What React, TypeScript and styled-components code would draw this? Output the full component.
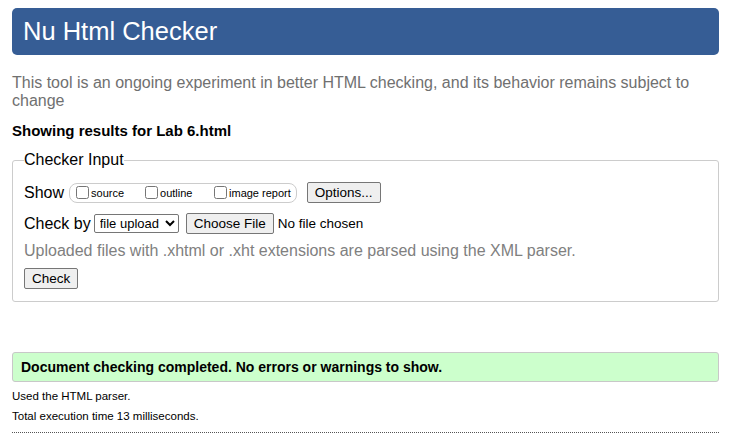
import styled, { createGlobalStyle } from "styled-components";

const GlobalStyle = createGlobalStyle`
  body {
    margin: 0;
    font-family: "Liberation Sans", Arial, sans-serif;
    background: #fff;
    color: #000;
  }
`;

const Page = styled.div`
  padding: 8px 14px 0 12px;
`;

const Header = styled.h1`
  margin: 0;
  height: 47px;
  display: flex;
  align-items: center;
  padding: 0 11px;
  background: #365d95;
  color: #fff;
  font-size: 25.5px;
  font-weight: normal;
  border-radius: 5px;
`;

const Intro = styled.p`
  margin: 19px 0 0;
  font-size: 16px;
  line-height: 18px;
  color: #707070;
`;

const ResultsFor = styled.p`
  margin: 12px 0 0;
  font-size: 15px;
  font-weight: bold;
`;

const Fieldset = styled.fieldset`
  margin: 12px 0 0;
  padding: 8px 11px 12px;
  border: 1px solid #ccc;
  border-radius: 3px;
`;

const Legend = styled.legend`
  font-size: 16px;
  padding: 0;
  margin-left: 0;
`;

const Row = styled.div<{ $top?: number }>`
  display: flex;
  align-items: center;
  font-size: 16px;
  margin-top: ${(p) => p.$top ?? 0}px;
`;

const CheckGroup = styled.span`
  display: inline-flex;
  align-items: center;
  margin-left: 5px;
  height: 18px;
  padding: 0 5px 0 6px;
  border: 1px solid #ccc;
  border-radius: 8px;
`;

const CheckLabel = styled.label<{ $w?: number }>`
  display: inline-flex;
  align-items: center;
  width: ${(p) => (p.$w ? `${p.$w}px` : "auto")};
  font-size: 11px;
`;

const Box = styled.input`
  margin: 0 2px 0 0;
  width: 13px;
  height: 13px;
`;

const Button = styled.button<{ $left?: number }>`
  margin-left: ${(p) => p.$left ?? 0}px;
  font-family: "Liberation Sans", Arial, sans-serif;
  font-size: 13.5px;
  height: 21px;
  padding: 0 7px;
  background: #efefef;
  border: 1px solid #767676;
  border-radius: 2px;
  color: #000;
`;

const Select = styled.select`
  margin-left: 3px;
  font-family: "Liberation Sans", Arial, sans-serif;
  font-size: 13px;
  height: 19px;
  width: 85px;
  border: 1px solid #767676;
  border-radius: 2px;
  padding: 0 1px;
  background: #fff;
`;

const NoFile = styled.span`
  margin-left: 4px;
  font-size: 13.5px;
`;

const Hint = styled.p`
  margin: 8px 0 0;
  font-size: 16px;
  color: #808080;
`;

const Success = styled.div`
  margin-top: 50px;
  height: 28px;
  display: flex;
  align-items: center;
  padding: 0 8px;
  background: #ccffcc;
  border: 1px solid #c8c8c8;
  border-radius: 3px;
  font-size: 14px;
  font-weight: bold;
`;

const Note = styled.p<{ $top: number }>`
  margin: ${(p) => p.$top}px 0 0;
  font-size: 11.5px;
  line-height: 14px;
`;

const Divider = styled.hr`
  margin: 9px 0 0;
  border: 0;
  border-top: 1px dotted #555;
`;

export default function App() {
  return (
    <>
      <GlobalStyle />
      <Page>
        <Header>Nu Html Checker</Header>
        <Intro>
          This tool is an ongoing experiment in better HTML checking, and its behavior remains subject to
          change
        </Intro>
        <ResultsFor>Showing results for Lab 6.html</ResultsFor>
        <Fieldset>
          <Legend>Checker Input</Legend>
          <Row $top={5}>
            Show
            <CheckGroup>
              <CheckLabel $w={69}>
                <Box type="checkbox" /> source
              </CheckLabel>
              <CheckLabel $w={69}>
                <Box type="checkbox" /> outline
              </CheckLabel>
              <CheckLabel>
                <Box type="checkbox" /> image report
              </CheckLabel>
            </CheckGroup>
            <Button $left={10}>Options...</Button>
          </Row>
          <Row $top={10}>
            Check by
            <Select defaultValue="upload">
              <option value="upload">file upload</option>
            </Select>
            <Button $left={7}>Choose File</Button>
            <NoFile>No file chosen</NoFile>
          </Row>
          <Hint>Uploaded files with .xhtml or .xht extensions are parsed using the XML parser.</Hint>
          <Row $top={8}>
            <Button>Check</Button>
          </Row>
        </Fieldset>
        <Success>Document checking completed. No errors or warnings to show.</Success>
        <Note $top={7}>Used the HTML parser.</Note>
        <Note $top={6}>Total execution time 13 milliseconds.</Note>
        <Divider />
      </Page>
    </>
  );
}
